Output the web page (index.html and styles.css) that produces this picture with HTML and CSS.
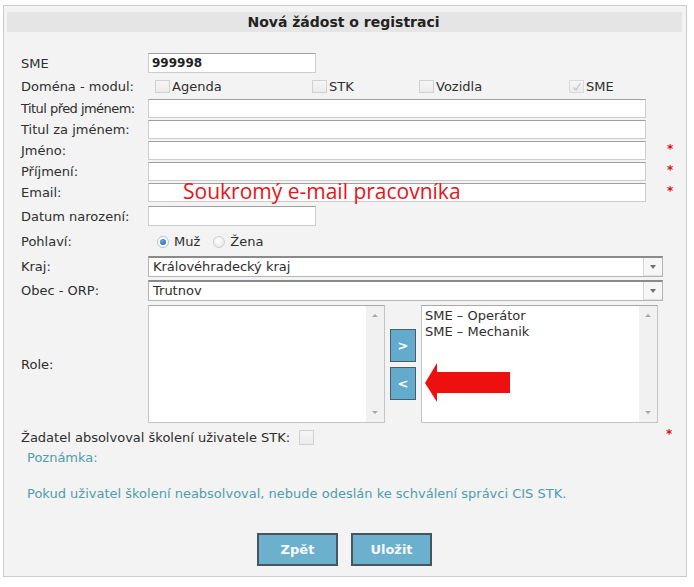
FILE: index.html
```html
<!DOCTYPE html>
<html lang="cs">
<head>
<meta charset="utf-8">
<title>Nová žádost o registraci</title>
<link rel="stylesheet" href="styles.css">
</head>
<body>
<div class="panel">
  <div class="header">Nová žádost o registraci</div>
  <div class="form">
    <div class="row h-sme">
      <span class="label">SME</span>
      <div class="field"><div class="input w-short val-bold">999998</div></div>
    </div>
    <div class="row h-dom">
      <span class="label">Doména - modul:</span>
      <div class="field checks">
        <span class="chk-item w-agenda"><span class="cb"></span>Agenda</span>
        <span class="chk-item w-stk"><span class="cb"></span>STK</span>
        <span class="chk-item w-voz"><span class="cb"></span>Vozidla</span>
        <span class="chk-item"><span class="cb cb-checked"><svg viewBox="0 0 14 14" width="14" height="14"><path d="M3.5 7.5 L6 10 L10.5 3" fill="none" stroke="#c4c4c4" stroke-width="1.2"/></svg></span>SME</span>
      </div>
    </div>
    <div class="row h-txt">
      <span class="label tight">Titul před jménem:</span>
      <div class="field"><div class="input w-full"></div></div>
    </div>
    <div class="row h-txt">
      <span class="label">Titul za jménem:</span>
      <div class="field"><div class="input w-full"></div></div>
    </div>
    <div class="row h-txt">
      <span class="label">Jméno:</span>
      <div class="field"><div class="input w-full"></div></div>
      <span class="star">*</span>
    </div>
    <div class="row h-txt">
      <span class="label">Příjmení:</span>
      <div class="field"><div class="input w-full"></div></div>
      <span class="star">*</span>
    </div>
    <div class="row h-txt">
      <span class="label">Email:</span>
      <div class="field"><div class="input w-full email"><span class="hint">Soukromý e-mail pracovníka</span></div></div>
      <span class="star">*</span>
    </div>
    <div class="row h-date">
      <span class="label">Datum narození:</span>
      <div class="field"><div class="input w-short"></div></div>
    </div>
    <div class="row h-sex">
      <span class="label">Pohlaví:</span>
      <div class="field radios">
        <span class="radio-item"><span class="radio radio-on"></span>Muž</span>
        <span class="radio-item"><span class="radio"></span>Žena</span>
      </div>
    </div>
    <div class="row h-sel">
      <span class="label">Kraj:</span>
      <div class="field"><div class="select">Královéhradecký kraj<span class="sel-arrow"></span></div></div>
    </div>
    <div class="row h-sel">
      <span class="label">Obec - ORP:</span>
      <div class="field"><div class="select">Trutnov<span class="sel-arrow"></span></div></div>
    </div>
    <div class="row h-role">
      <span class="label">Role:</span>
      <div class="field role">
        <div class="listbox"><div class="items"></div><div class="scroll"><span class="up"></span><span class="down"></span></div></div>
        <div class="movers">
          <button class="mover">&gt;</button>
          <button class="mover">&lt;</button>
        </div>
        <div class="listbox">
          <div class="items">
            <div>SME – Operátor</div>
            <div>SME – Mechanik</div>
          </div>
          <div class="scroll"><span class="up"></span><span class="down"></span></div>
        </div>
        <svg class="arrow" viewBox="0 0 85 39" width="85" height="39"><path d="M0 20 L12 0 L12 9 L85 9 L85 30 L12 30 L12 39 Z" fill="#ee0f0f"/></svg>
      </div>
    </div>
    <div class="row-wide h-skol">
      <span class="skol-label">Žadatel absolvoval školení uživatele STK:</span>
      <span class="cb cb-skol"></span>
      <span class="star star-skol">*</span>
    </div>
  </div>
  <p class="note note-title">Poznámka:</p>
  <p class="note note-text">Pokud uživatel školení neabsolvoval, nebude odeslán ke schválení správci CIS STK.</p>
  <div class="actions">
    <button class="btn">Zpět</button>
    <button class="btn">Uložit</button>
  </div>
</div>
</body>
</html>
```
FILE: styles.css
```css
* { box-sizing: border-box; }

body {
  margin: 0;
  background: #ffffff;
  font-family: "DejaVu Sans", Verdana, sans-serif;
  font-size: 13px;
  color: #2e2e2e;
}

.panel {
  margin: 5px 0 0 3px;
  width: 684px;
  border: 1px solid #cbcbcb;
  background: #f3f3f3;
  padding: 6px 4px 10px 3px;
}

.header {
  height: 20px;
  line-height: 20px;
  background: #e5e5e5;
  text-align: center;
  font-weight: bold;
  font-size: 14px;
  color: #222;
  padding-right: 2px;
}

.form {
  margin-top: 20px;
  padding-left: 14px;
}

.row {
  display: grid;
  grid-template-columns: 127px 515px 1fr;
  align-items: center;
}

.h-sme { height: 22px; }
.h-dom { height: 24px; }
.h-txt { height: 21px; }
.h-date { height: 26px; }
.h-sex { height: 25px; }
.h-sel { height: 24px; }
.h-role { height: 124px; }

.label { white-space: nowrap; }
.tight { letter-spacing: -0.55px; }

.field { position: relative; }

.input {
  height: 20px;
  background: #fff;
  border: 1px solid #cccccc;
  border-top-color: #9f9f9f;
  padding-left: 3px;
  line-height: 18px;
}
.h-txt .input { height: 19px; }
.w-short { width: 168px; }
.w-full { width: 498px; }
.val-bold { font-weight: bold; color: #222; font-size: 12px; }

.email { overflow: visible; position: relative; }
.hint {
  position: absolute;
  left: 34px;
  top: -6px;
  font-family: "Open Sans", "Noto Sans", sans-serif;
  font-size: 21px;
  line-height: 26px;
  color: #e8141b;
  white-space: nowrap;
}

.star {
  color: #e01010;
  font-weight: bold;
  font-size: 12px;
  padding-left: 4px;
  line-height: 12px;
  align-self: start;
  margin-top: 3px;
}

.checks { display: flex; padding-left: 7px; align-items: center; }
.chk-item { display: flex; align-items: center; }
.w-agenda { width: 157px; }
.w-stk { width: 107px; }
.w-voz { width: 150px; }

.cb {
  display: inline-block;
  width: 15px;
  height: 13px;
  border: 1px solid #d0d0d0;
  background: linear-gradient(#f6f6f6, #ebebeb);
  margin-right: 2px;
  position: relative;
}
.cb svg { position: absolute; left: 0; top: -1px; }
.cb-checked { border-color: #dadada; }

.radios { display: flex; padding-left: 9px; align-items: center; }
.radio-item { display: flex; align-items: center; margin-right: 13px; }
.radio {
  display: inline-block;
  width: 12px;
  height: 12px;
  border-radius: 50%;
  border: 1px solid #cfcfcf;
  background: radial-gradient(circle at 40% 35%, #ffffff, #e2e2e2);
  margin-right: 5px;
  position: relative;
}
.radio-on { border-color: #b8c4cc; background: radial-gradient(circle, #ffffff 60%, #e4e4e4); }
.radio-on::after {
  content: "";
  position: absolute;
  left: 2px;
  top: 2px;
  width: 6px;
  height: 6px;
  border-radius: 50%;
  background: radial-gradient(circle at 40% 35%, #6aa6dc, #1d5e9e);
}

.select {
  position: relative;
  width: 515px;
  height: 21px;
  background: #fff;
  border: 1px solid #b4b4b4;
  border-top: 2px solid #8a8a8a;
  padding-left: 4px;
  line-height: 18px;
}
.sel-arrow {
  position: absolute;
  right: 0;
  top: 0;
  width: 19px;
  height: 18px;
  border-left: 1px solid #d6d6d6;
  border-bottom: 1px solid #e2e2e2;
  background: #f6f6f6;
}
.sel-arrow::after {
  content: "";
  position: absolute;
  left: 6px;
  top: 7px;
  border-left: 3.5px solid transparent;
  border-right: 3.5px solid transparent;
  border-top: 4px solid #707070;
}

.role { display: flex; align-items: center; height: 118px; }
.listbox {
  width: 237px;
  height: 118px;
  background: #fff;
  border: 1px solid #c4c4c4;
  border-top-color: #a8a8a8;
  display: flex;
}
.items { flex: 1; padding: 2px 0 0 3px; line-height: 16px; }
.scroll {
  width: 18px;
  background: #f1f1f1;
  position: relative;
}
.up, .down {
  position: absolute;
  left: 6px;
  border-left: 3px solid transparent;
  border-right: 3px solid transparent;
}
.up { top: 8px; border-bottom: 3px solid #a8a8a8; }
.down { bottom: 8px; border-top: 3px solid #a8a8a8; }

.movers {
  display: flex;
  flex-direction: column;
  gap: 5px;
  margin: 0 5px;
}
.mover {
  width: 26px;
  height: 33px;
  padding: 0;
  background: #63abcc;
  border: 1px solid #4a5c66;
  color: #fff;
  font-family: "DejaVu Sans", Verdana, sans-serif;
  font-size: 13px;
  font-weight: bold;
}

.arrow { position: absolute; left: 277px; top: 58px; }

.row-wide {
  display: flex;
  align-items: center;
  position: relative;
}
.h-skol { height: 22px; }
.skol-label { margin-right: 9px; }
.cb-skol { width: 15px; height: 15px; }
.star-skol { position: absolute; left: 641px; top: 2px; margin: 0; }

.note {
  margin: 0;
  padding-left: 20px;
  color: #4f9da8;
  line-height: 20px;
}
.note-title { margin-top: 0; }
.note-text { margin-top: 16px; }

.actions {
  display: flex;
  justify-content: center;
  gap: 13px;
  margin-top: 29px;
}
.btn {
  width: 81px;
  height: 33px;
  padding: 0;
  background: #6cb0cd;
  border: 2px solid #46555e;
  color: #f4fafd;
  font-family: "DejaVu Sans", Verdana, sans-serif;
  font-size: 13px;
  font-weight: bold;
}
```
